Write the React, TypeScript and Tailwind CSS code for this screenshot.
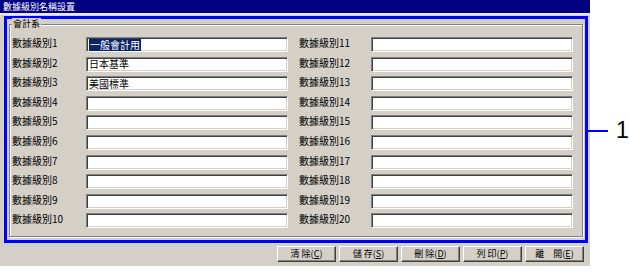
import React from "react";

const font = { fontFamily: '"Noto Sans CJK TC", "Noto Sans CJK SC", sans-serif' };

const leftRows = [
  { label: "數據級別1", value: "一般會計用", selected: true },
  { label: "數據級別2", value: "日本基準" },
  { label: "數據級別3", value: "美國標準" },
  { label: "數據級別4", value: "" },
  { label: "數據級別5", value: "" },
  { label: "數據級別6", value: "" },
  { label: "數據級別7", value: "" },
  { label: "數據級別8", value: "" },
  { label: "數據級別9", value: "" },
  { label: "數據級別10", value: "" },
];

const rightRows = Array.from({ length: 10 }, (_, i) => ({ label: `數據級別${i + 11}`, value: "" }));

const buttons = [
  { text: "清 除", key: "C" },
  { text: "儲 存", key: "S" },
  { text: "刪 除", key: "D" },
  { text: "列 印", key: "P" },
  { text: "離　開", key: "E" },
];

const inputClass =
  "h-[15px] w-[202px] bg-white border border-t-[#808080] border-l-[#808080] border-b-white border-r-white shadow-[inset_1px_1px_0_#404040,inset_-1px_-1px_0_#d4d0c8] flex items-center pl-[1px] text-[10px] leading-[12px] text-black";

const Field = ({ label, value, selected, labelWidth }: { label: string; value: string; selected?: boolean; labelWidth: string }) => (
  <div className="flex h-[19.6px] items-start">
    <div className={`${labelWidth} text-[10px] leading-[11px] text-black`}>{label}</div>
    <div className={inputClass}>
      {value ? (
        <span className={selected ? "ml-[1px] bg-[#0a246a] px-[1px] text-white" : "ml-[1px]"}>{value}</span>
      ) : null}
    </div>
  </div>
);

export default function App() {
  return (
    <div className="relative h-[272px] w-[629px] overflow-hidden bg-white" style={font}>
      <div className="flex h-[266px] w-[590px] flex-col bg-[#d4d0c8]">
        <div className="h-[13px] bg-[#000080] pl-[3px] text-[9px] leading-[13px] text-white">數據級別名稱設置</div>
        <div className="h-[2px] bg-[#ece9d8]" />
        <div className="ml-[4px] mt-[1px] h-[227px] w-[584px] border-[3px] border-[#0000ff] pl-[2px] pt-[5px]">
          <div className="relative h-[213px] w-[574px] border border-[#808080] shadow-[inset_1px_1px_0_#ffffff,1px_1px_0_#ffffff] pl-[2px] pt-[12px]">
            <span className="absolute left-[2px] top-[-7px] bg-[#d4d0c8] px-[1px] text-[9px] leading-[12px] text-black">會計系</span>
            <div className="flex">
              <div className="flex flex-col">
                {leftRows.map((r) => (
                  <Field key={r.label} label={r.label} value={r.value} selected={r.selected} labelWidth="w-[74px]" />
                ))}
              </div>
              <div className="ml-[11px] flex flex-col">
                {rightRows.map((r) => (
                  <Field key={r.label} label={r.label} value={r.value} labelWidth="w-[72px]" />
                ))}
              </div>
            </div>
          </div>
        </div>
        <div className="mt-[3px] flex gap-[3px] pl-[277px]">
          {buttons.map((b) => (
            <div
              key={b.key}
              className="flex h-[16px] w-[59px] items-center justify-center border border-t-white border-l-white border-b-[#404040] border-r-[#404040] shadow-[inset_-1px_-1px_0_#808080] text-[9px] leading-[12px] text-black"
            >
              {b.text}(<span className="underline">{b.key}</span>)
            </div>
          ))}
        </div>
      </div>
      <div className="absolute left-[587px] top-[130px] h-[2px] w-[21px] bg-[#0000ff]" />
      <div className="absolute left-[616px] top-[117px] text-[23px] leading-[26px] text-black" style={{ fontFamily: '"Liberation Sans", Arial, sans-serif' }}>
        1
      </div>
    </div>
  );
}
